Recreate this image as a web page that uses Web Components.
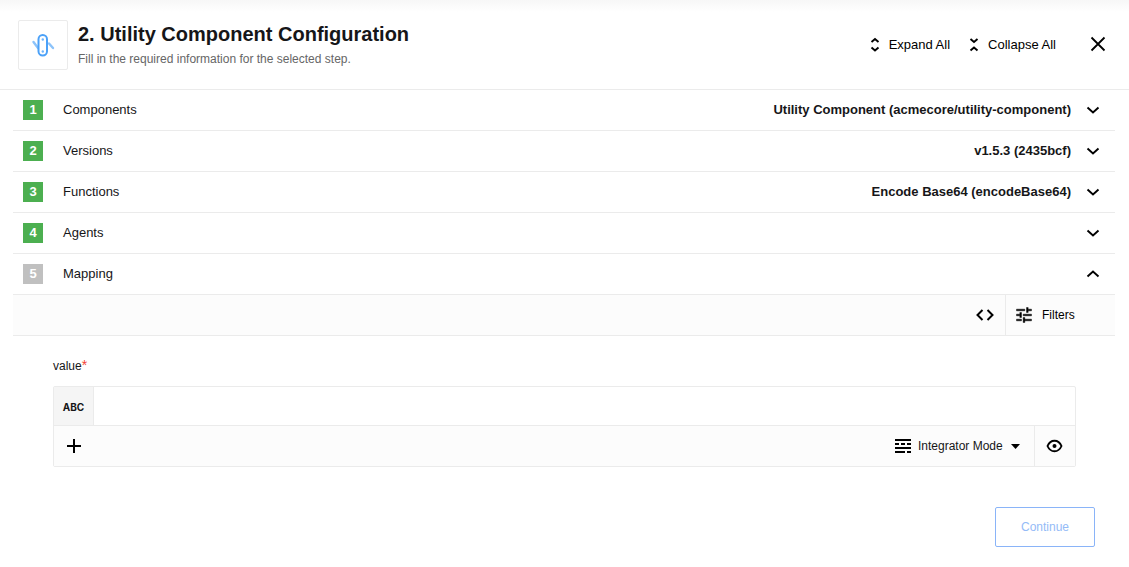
<!DOCTYPE html>
<html lang="en">
<head>
<meta charset="utf-8">
<meta name="viewport" content="width=device-width, initial-scale=1">
<title>Utility Component Configuration</title>
<style>
  :root { --line: #ebebeb; --bar: #fcfcfc; --ink: #161618; --green: #4caf50; --blue: #8ab4f8; }
  body { margin: 0; background: #fff; color: var(--ink); font: 13px/20px "Liberation Sans", Arial, sans-serif; }
</style>
</head>
<body>
<step-panel>
  <step-header slot="header">
    <span slot="title">2. Utility Component Configuration</span>
    <span slot="subtitle">Fill in the required information for the selected step.</span>
  </step-header>
  <config-section number="1" done>Components<span slot="value">Utility Component (acmecore/utility-component)</span></config-section>
  <config-section number="2" done>Versions<span slot="value">v1.5.3 (2435bcf)</span></config-section>
  <config-section number="3" done>Functions<span slot="value">Encode Base64 (encodeBase64)</span></config-section>
  <config-section number="4" done>Agents</config-section>
  <config-section number="5" open>Mapping</config-section>
  <mapping-toolbar></mapping-toolbar>
  <mapping-field name="value"></mapping-field>
  <panel-footer slot="footer">Continue</panel-footer>
</step-panel>

<script>
const base = `<style>
  *, *::before { box-sizing: border-box; }
  button, input, select { font: inherit; color: inherit; background: none; border: 0; border-radius: 0; margin: 0; padding: 0; }
  button { cursor: pointer; }
  svg { display: block; flex: none; }
</style>`;
function define(name, render) {
  customElements.define(name, class extends HTMLElement {
    constructor() {
      super();
      this.attachShadow({ mode: "open" });
    }
    connectedCallback() {
      this.shadowRoot.innerHTML = base + render(this);
    }
  });
}

define("step-panel", () => `<style>
  :host { display: block; }
  main { padding: 0 14px 0 13px; }
</style>
<slot name="header"></slot><main><slot></slot></main><slot name="footer"></slot>`);

define("step-header", () => `<style>
  :host { display: block; }
  header { display: flex; align-items: center; height: 90px; padding: 0 20px 0 18px; border-bottom: 1px solid var(--line); background: linear-gradient(#f7f7f7, #fff 12px); }
  .logo { display: grid; place-items: center; width: 50px; height: 50px; border: 1px solid var(--line); border-radius: 2px; background: #fff; }
  .text { flex: 1; padding-left: 10px; height: 50px; }
  h1 { margin: 0; font-size: 20px; line-height: 28px; font-weight: 700; }
  p { margin: 0; font-size: 12px; line-height: 22px; color: #666; }
  nav { display: flex; align-items: center; color: #000; }
  nav button { display: flex; align-items: center; gap: 6px; }
  .collapse { margin-left: 16px; }
  .close { margin-left: 31px; }
</style>
<header>
  <div class="logo"><svg width="24" height="24" viewBox="0 0 24 24" fill="none" stroke-linecap="round">
    <path d="M2.500 9 7 15M18 10.500l4 4.500" stroke="#8cc3fa" stroke-width="2.400"/>
    <rect x="7.500" y="2" width="8.500" height="20.500" rx="4.200" fill="#fff" stroke="#4ba1f8" stroke-width="2"/>
    <circle cx="11.800" cy="6.500" r="1.200" fill="#6fb4fa"/><circle cx="11.800" cy="18.500" r="1.200" fill="#6fb4fa"/></svg></div>
  <div class="text"><h1><slot name="title"></slot></h1><p><slot name="subtitle"></slot></p></div>
  <nav aria-label="Step actions">
    <button type="button"><svg width="16" height="16" viewBox="0 0 16 16" fill="none" stroke="#000" stroke-width="1.900"><path d="M4.500 5 8 2l3.500 3M4.500 10.500l3.500 3 3.500-3"/></svg>Expand All</button>
    <button type="button" class="collapse"><svg width="16" height="16" viewBox="0 0 16 16" fill="none" stroke="#000" stroke-width="1.900"><path d="M4.500 2 8 5l3.500-3M4.500 13.500l3.500-3 3.500 3"/></svg>Collapse All</button>
    <button type="button" class="close" aria-label="Close"><svg width="22" height="22" viewBox="0 0 22 22" fill="none" stroke="#000" stroke-width="1.800"><path d="m4.500 3.500 13 13m0-13-13 13"/></svg></button>
  </nav>
</header>`);

define("config-section", el => {
  const open = el.hasAttribute("open");
  return `<style>
  :host { display: block; }
  button { display: flex; align-items: center; width: 100%; height: 41px; padding: 0 13px 0 10px; border-bottom: 1px solid var(--line); text-align: left; }
  .num { width: 20px; height: 20px; margin-right: 20px; background: #c0c0c0; color: #fff; font-weight: 700; text-align: center; }
  :host([done]) .num { background: var(--green); }
  .label { flex: 1; height: 20px; }
  .value { height: 20px; margin-right: 13px; font-weight: 700; }
  .num, .label, .value { line-height: 19px; }
</style>
<button type="button" aria-expanded="${open}"><span class="num">${el.getAttribute("number")}</span><span class="label"><slot></slot></span><span class="value"><slot name="value"></slot></span>
<svg width="18" height="18" viewBox="0 0 18 18" fill="none" stroke="#000" stroke-width="1.900"><path d="${open ? "m3.500 11.500 5.500-5 5.500 5" : "m3.500 6.500 5.500 5 5.500-5"}"/></svg></button>`;
});

define("mapping-toolbar", () => `<style>
  :host { display: flex; justify-content: flex-end; height: 41px; background: var(--bar); border-bottom: 1px solid var(--line); box-sizing: border-box; }
  button { display: flex; align-items: center; }
  .code { padding: 0 10px; }
  .filters { width: 110px; gap: 8px; padding-left: 8px; border-left: 1px solid var(--line); font-size: 12px; color: #000; }
</style>
<button type="button" class="code" aria-label="Developer mode"><svg width="20" height="20" viewBox="0 0 20 20" fill="none" stroke="#000" stroke-width="2"><path d="m7.500 5-5 5 5 5M12.500 5l5 5-5 5"/></svg></button>
<button type="button" class="filters"><svg width="20" height="20" viewBox="0 0 24 24" fill="#000"><path d="M3 17v2h6v-2H3zM3 5v2h10V5H3zm10 16v-2h8v-2h-8v-2h-2v6h2zM7 9v2H3v2h4v2h2V9H7zm14 4v-2H11v2h10zm-6-4h2V7h4V5h-4V3h-2v6z" stroke="#000" stroke-width=".5"/></svg>Filters</button>`);

define("mapping-field", el => {
  const name = el.getAttribute("name");
  return `<style>
  :host { display: block; padding: 20px 39px 0 40px; font-size: 12px; }
  label { display: block; height: 30px; }
  .star { color: #f44336; font-size: 14px; line-height: 14px; }
  .box { border: 1px solid var(--line); border-radius: 2px; }
  .row { display: flex; }
  .type { width: 40px; height: 38px; background: #f5f5f5; border-right: 1px solid var(--line); font: 700 10px/40px Inter, sans-serif; text-align: center; }
  input { flex: 1; min-width: 0; padding: 0 10px; outline: 0; }
  .bar { height: 41px; background: var(--bar); border-top: 1px solid var(--line); align-items: stretch; }
  .plus { width: 40px; display: grid; place-items: center; }
  .mode { display: flex; align-items: center; margin-left: auto; padding-right: 10px; }
  select { appearance: none; height: 20px; margin-left: 6px; padding-right: 21px; line-height: 20px; }
  .caret { margin-left: -16px; pointer-events: none; }
  .eye { display: grid; place-items: center; width: 41px; border-left: 1px solid var(--line); }
</style>
<label for="field">${name}<span class="star">*</span></label>
<div class="box">
  <div class="row"><span class="type">ABC</span><input id="field" type="text" required></div>
  <div class="row bar">
    <button type="button" class="plus" aria-label="Add"><svg width="20" height="20" viewBox="0 0 20 20" stroke="#000" stroke-width="2"><path d="M3 10h14M10 3v14"/></svg></button>
    <div class="mode">
      <svg width="18" height="16" viewBox="0 0 18 16" stroke="#000" stroke-width="2"><path d="M1 2h16M1 6h4m2 0h4m2 0h4M1 10h16M1 14h10m2 0h4"/></svg>
      <select aria-label="Mode"><option>Integrator Mode</option></select>
      <svg class="caret" width="16" height="16" viewBox="0 0 16 16"><path d="M3 6h9l-4.500 5z"/></svg>
    </div>
    <button type="button" class="eye" aria-label="Preview"><svg width="20" height="20" viewBox="0 0 20 20" fill="none" stroke="#000" stroke-width="1.900"><path d="M2.500 10c3-7 11-7 14 0-3 7-11 7-14 0z"/><circle cx="9.500" cy="10" r="2" fill="#000" stroke="none"/></svg></button>
  </div>
</div>`;
});

define("panel-footer", () => `<style>
  :host { display: flex; justify-content: flex-end; padding: 40px 34px 20px; }
  button { width: 100px; height: 40px; border: 1px solid var(--blue); border-radius: 2px; color: #94bbf7; font-size: 12px; cursor: default; }
</style>
<button type="button" disabled><slot></slot></button>`);
</script>
</body>
</html>
